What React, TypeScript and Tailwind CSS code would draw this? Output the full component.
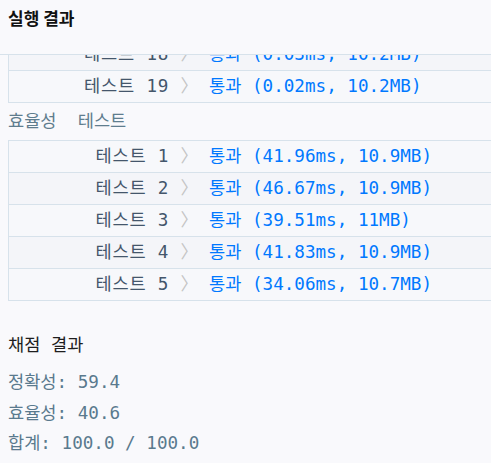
const mono = "font-['DejaVu_Sans_Mono','Noto_Sans_CJK_KR',monospace]";

type Row = { n: number; time: string; mem: string };

const firstRows: Row[] = [
  { n: 18, time: "0.03ms", mem: "10.2MB" },
  { n: 19, time: "0.02ms", mem: "10.2MB" },
];

const effRows: Row[] = [
  { n: 1, time: "41.96ms", mem: "10.9MB" },
  { n: 2, time: "46.67ms", mem: "10.9MB" },
  { n: 3, time: "39.51ms", mem: "11MB" },
  { n: 4, time: "41.83ms", mem: "10.9MB" },
  { n: 5, time: "34.06ms", mem: "10.7MB" },
];

function ResultRow({ row }: { row: Row }) {
  const even = row.n % 2 === 0;
  return (
    <div
      className={`flex h-[32px] items-center border-b border-[#d7e2eb] ${
        even ? "bg-[#f4f5f9]" : "bg-[#f7f8fb]"
      }`}
    >
      <div className="w-[191px] shrink-0 pr-[1px] text-right tracking-[0.8px] text-[#44566b] whitespace-pre">
        테스트 {row.n} <span className="text-[#c4c4c4]">〉</span>
      </div>
      <div className="pl-[9px] text-[#0078ff] whitespace-pre">
        통과 ({row.time}, {row.mem})
      </div>
    </div>
  );
}

function ResultTable({ rows, className = "" }: { rows: Row[]; className?: string }) {
  return (
    <div className={`w-[540px] border-l border-[#d7e2eb] ${className}`}>
      {rows.map((r) => (
        <ResultRow key={r.n} row={r} />
      ))}
    </div>
  );
}

export default function App() {
  return (
    <div className={`flex h-[463px] w-[491px] flex-col overflow-hidden bg-[#f9f9fc] text-[17.6px] ${mono}`}>
      {/* header */}
      <div className="h-[55px] shrink-0 border-b border-[#d7e2eb] pl-2 pt-[6px]">
        <h1 className="font-['Noto_Sans_CJK_KR',sans-serif] text-[17px] font-bold leading-[24px] text-[#111]">
          실행 결과
        </h1>
      </div>

      {/* scrolled body */}
      <div className="flex-1 overflow-hidden pl-2">
        <ResultTable rows={firstRows} className="-mt-[16px]" />

        <div className="flex h-[37px] items-center text-[#5f7d8e] whitespace-pre">
          효율성  테스트
        </div>

        <ResultTable rows={effRows} className="border-t" />

        <div className="mt-[29px] h-[31px] leading-[31px] text-[#1e1e1e]">채점 결과</div>
        <div className="mt-[6px] text-[#5a7a8e] leading-[30.5px] whitespace-pre">
          <div>정확성: 59.4</div>
          <div>효율성: 40.6</div>
          <div>합계: 100.0 / 100.0</div>
        </div>
      </div>
    </div>
  );
}
